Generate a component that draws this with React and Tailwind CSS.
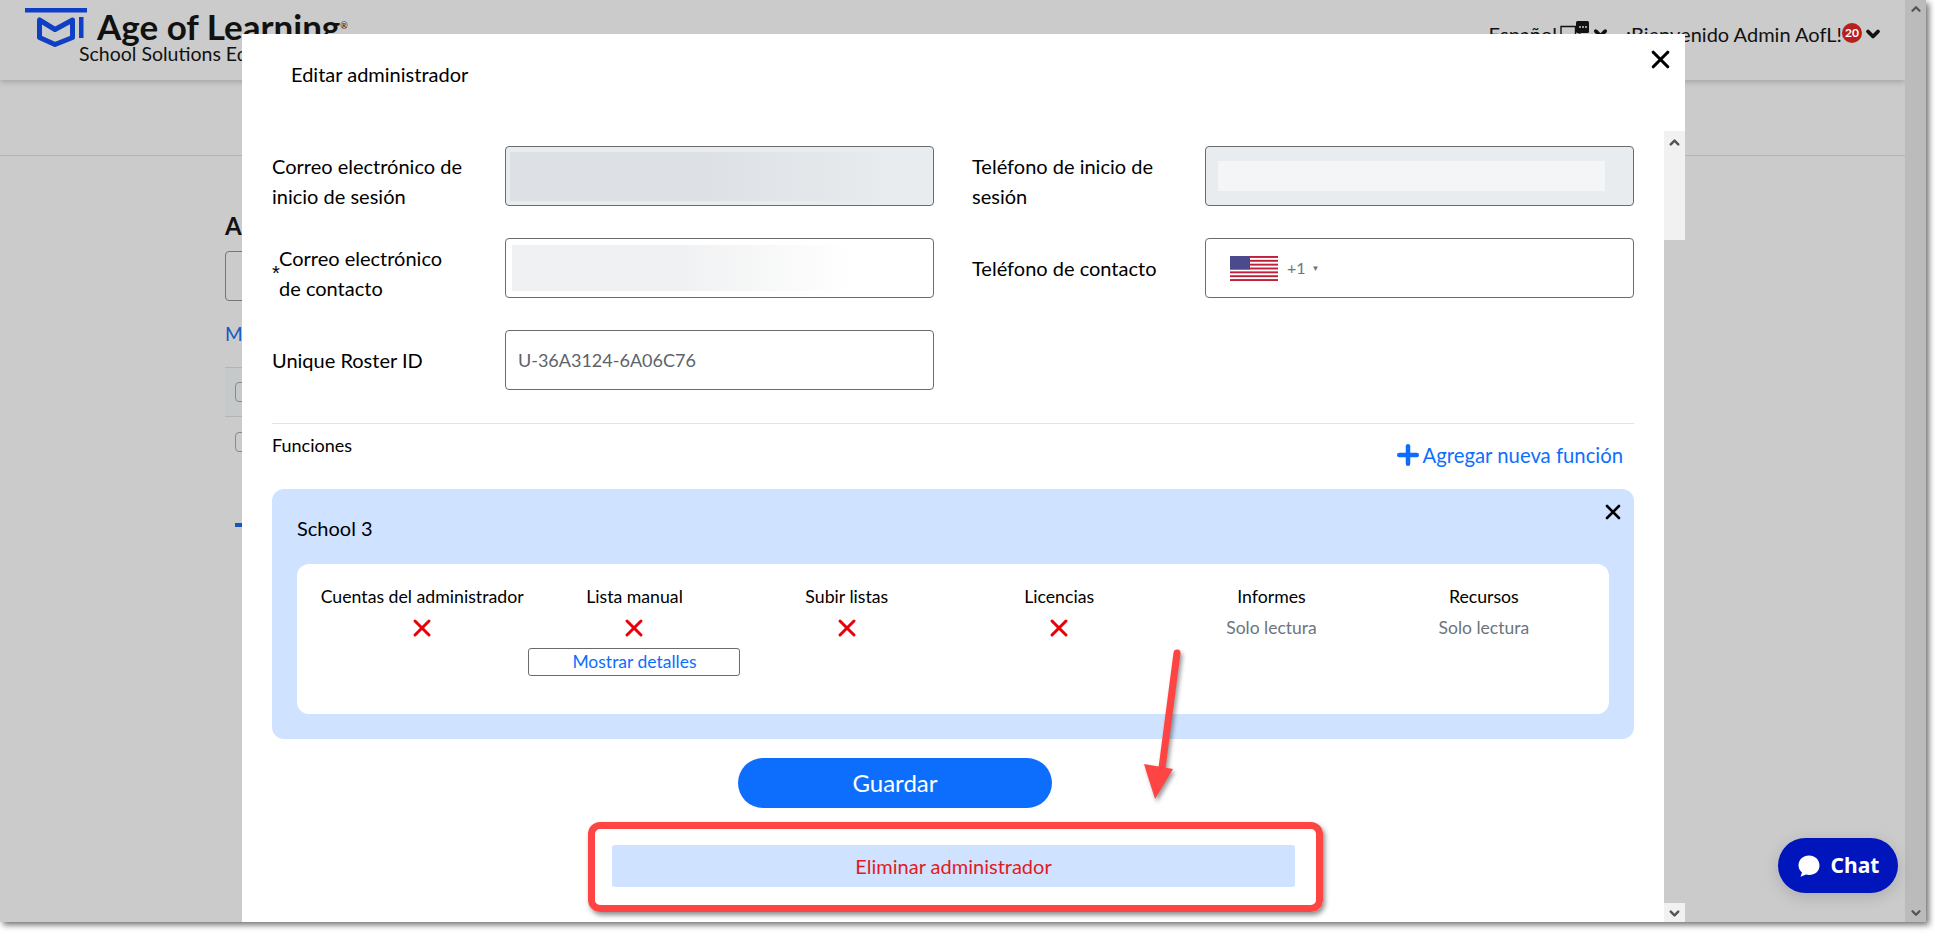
import { X, ChevronUp, ChevronDown, Plus } from "lucide-react";

const permissions = [
  { name: "Cuentas del administrador", denied: true },
  { name: "Lista manual", denied: true, details: true },
  { name: "Subir listas", denied: true },
  { name: "Licencias", denied: true },
  { name: "Informes", denied: false },
  { name: "Recursos", denied: false },
];

function Logo() {
  return (
    <svg width="62" height="40" viewBox="0 0 62 40" className="shrink-0">
      <rect x="0" y="0" width="62" height="4.500" fill="#0f3fc4" />
      <path d="M14.500 12v17.500L30 36.500l17.500-7V12L30 21.500z" fill="none" stroke="#0f3fc4" strokeWidth="5" strokeLinejoin="round" />
      <rect x="54" y="9" width="4.500" height="21" fill="#0f3fc4" />
    </svg>
  );
}

function LanguageIcon() {
  return (
    <svg width="30" height="20" viewBox="0 0 30 20" className="shrink-0 ml-[3px]">
      <path d="M1 5.500h14.500v10H8l-2.500 3-1-3H1z" fill="none" stroke="#111" strokeWidth="1.400" />
      <path d="M16 1.500q0-1.500 1.500-1.500h10q1.500 0 1.500 1.500v9q0 1.500-1.500 1.500h-10q-1.500 0-1.500-1.500z" fill="#111" />
      <circle cx="20" cy="6" r="0.900" fill="#ddd" />
      <circle cx="23" cy="6" r="0.900" fill="#ddd" />
      <circle cx="26" cy="6" r="0.900" fill="#ddd" />
      <circle cx="19.500" cy="14.500" r="2.200" fill="#111" />
      <rect x="17" y="16" width="5" height="4" fill="#111" />
    </svg>
  );
}

function UsFlag() {
  const stripes = [0, 2, 4, 6, 8, 10, 12];
  return (
    <svg width="48" height="25" viewBox="0 0 48 25" className="shrink-0">
      <rect width="48" height="25" fill="#fff" />
      {stripes.map((i) => (
        <rect key={i} y={(i * 25) / 13} width="48" height={25 / 13} fill="#c0203a" />
      ))}
      <rect width="20" height="13.5" fill="#4a4a8c" />
    </svg>
  );
}

function Field({ label, star, tall, children }) {
  return (
    <div className="flex items-center w-[662px]">
      <div
        className={`w-[233px] shrink-0 pr-[30px] text-[20px] leading-[30px] text-black relative ${star ? "pl-[7px]" : ""} ${
          tall ? "h-[60px] pt-[5px]" : ""
        }`}
      >
        {star && <span className="absolute left-0 top-[20px] text-[20px] font-['Liberation_Sans',sans-serif]">*</span>}
        {label}
      </div>
      {children}
    </div>
  );
}

function Box({ disabled, children }) {
  return (
    <div
      className={`w-[429px] h-[60px] rounded-[4px] border border-[#6b6b6b] flex items-center overflow-hidden ${
        disabled ? "bg-[#e9ecef]" : "bg-white"
      }`}
    >
      {children}
    </div>
  );
}

export default function App() {
  return (
    <div className="relative w-[1935px] h-[936px] bg-white overflow-hidden font-['Lato',sans-serif]">
      <div className="relative w-[1926px] h-[922px] bg-[#cbcbcb] shadow-[3px_3px_6px_rgba(0,0,0,0.55)] flex overflow-hidden">
        {/* page behind the modal */}
        <div className="flex-1 min-w-0 flex flex-col">
          <header className="h-[80px] shadow-[0_2px_6px_rgba(0,0,0,0.2)] flex justify-between pl-[25px] pr-[22px]">
            <div className="pt-[8px] flex">
              <Logo />
              <div className="ml-[10px]">
                <div className="text-[35px] leading-[36px] font-bold text-[#111] whitespace-nowrap">
                  Age of Learning<span className="align-top text-[9px] font-normal">®</span>
                </div>
                <div className="-ml-[18px] text-[19.5px] leading-[20px] text-[#111] whitespace-nowrap">
                  School Solutions Edition
                </div>
              </div>
            </div>
            <div className="flex items-start pt-[21px] text-[20px] leading-[26px] text-[#111]">
              <span>Español</span>
              <LanguageIcon />
              <ChevronDown className="ml-[1px] mt-[3px]" size={19} strokeWidth={4.5} color="#111" />
              <span className="ml-[16px]">¡Bienvenido Admin AofL!</span>
              <span className="w-[20px] h-[20px] rounded-full bg-[#b81f1f] text-white text-[12px] leading-[20px] font-bold text-center mt-[2px]">
                20
              </span>
              <ChevronDown className="ml-[1px] mt-[3px]" size={20} strokeWidth={4.5} color="#111" />
            </div>
          </header>
          <div className="h-[76px] border-b border-[#b4b4b4]" />
          <div className="pl-[225px] pt-[55px]">
            <div className="text-[24px] leading-[30px] font-bold text-[#111]">A</div>
            <div className="mt-[10px] w-[60px] h-[50px] border border-[#777] rounded-[4px]" />
            <div className="mt-[21px] text-[19px] leading-[24px] text-[#1656c4]">M</div>
            <div className="mt-[21px] w-[100px] h-[50px] border-y border-[#b4b4b4] bg-[#c6c9c9] flex items-center pl-[10px]">
              <span className="w-[20px] h-[20px] border border-[#8a8a8a] rounded-[4px]" />
            </div>
            <div className="h-[50px] flex items-center pl-[10px]">
              <span className="w-[20px] h-[20px] border border-[#8a8a8a] rounded-[4px]" />
            </div>
            <div className="mt-[56px] ml-[10px] w-[20px] h-[4px] bg-[#1656c4]" />
          </div>
        </div>
        <div className="w-[21px] shrink-0 bg-[#bbbbbb] flex flex-col justify-between items-center py-[2px]">
          <ChevronUp size={14} strokeWidth={4} color="#555" />
          <ChevronDown size={14} strokeWidth={4} color="#555" />
        </div>

        {/* modal */}
        <div className="absolute left-[242px] top-[34px] w-[1443px] h-[888px] flex flex-col">
          <div className="h-[97px] shrink-0 bg-white flex justify-between pl-[49px] pr-[10px]">
            <div className="pt-[26px] text-[20px] leading-[28px] text-black">Editar administrador</div>
            <X className="mt-[11px]" size={29} strokeWidth={2.6} color="#000" />
          </div>
          <div className="flex-1 min-h-0 flex">
            <div className="flex-1 bg-white pl-[30px] pr-[30px] overflow-hidden">
              <div className="pt-[15px] grid grid-cols-[662px_662px] gap-x-[38px] gap-y-[32px]">
                <Field tall label="Correo electrónico de inicio de sesión">
                  <Box disabled>
                    <div className="ml-[4px] w-[385px] h-[49px] bg-gradient-to-r from-[#dde0e4] via-[#dde0e4] to-[#e9ecef]" />
                  </Box>
                </Field>
                <Field tall label="Teléfono de inicio de sesión">
                  <Box disabled>
                    <div className="ml-[12px] w-[387px] h-[30px] bg-[#f4f5f7]" />
                  </Box>
                </Field>
                <Field tall star label={<span className="block w-[180px]">Correo electrónico de contacto</span>}>
                  <Box>
                    <div className="ml-[6px] w-[340px] h-[46px] bg-gradient-to-r from-[#f0f1f2] via-[#f0f1f2] to-white" />
                  </Box>
                </Field>
                <Field label="Teléfono de contacto">
                  <Box>
                    <div className="ml-[24px] flex items-center">
                      <UsFlag />
                      <span className="ml-[9px] text-[16px] text-[#6c757d]">+1</span>
                      <span className="ml-[6px] text-[8px] text-[#6c757d]">▼</span>
                    </div>
                  </Box>
                </Field>
                <Field label="Unique Roster ID">
                  <Box>
                    <span className="ml-[12px] text-[18px] text-[#5c636a]">U-36A3124-6A06C76</span>
                  </Box>
                </Field>
              </div>
              <div className="mt-[33px] border-t border-[#e3e3e3] flex justify-between items-start pr-[11px] w-[1362px]">
                <span className="mt-[11px] text-[18px] leading-[20px] text-black">Funciones</span>
                <span className="mt-[15px] flex items-center text-[20.3px] leading-[32px] text-[#0d6efd]">
                  <Plus size={30} strokeWidth={3.6} />
                  Agregar nueva función
                </span>
              </div>
              <section className="mt-[18px] w-[1362px] h-[250px] rounded-[12px] bg-[#cfe2ff] px-[25px] relative">
                <X className="absolute right-[9px] top-[11px]" size={24} strokeWidth={2.6} color="#000" />
                <div className="h-[75px] flex items-center text-[20px] pt-[2px] text-black">School 3</div>
                <div className="h-[150px] rounded-[12px] bg-white grid grid-cols-6 px-[19px] pt-[21px]">
                  {permissions.map((p) => (
                    <div key={p.name} className="flex flex-col items-center">
                      <span className="text-[17.7px] leading-[24px] text-black whitespace-nowrap">{p.name}</span>
                      {p.denied ? (
                        <X className="mt-[5px]" size={28} strokeWidth={2.6} color="#e8000b" />
                      ) : (
                        <span className="mt-[7px] text-[17.5px] leading-[24px] text-[#6c757d]">Solo lectura</span>
                      )}
                      {p.details && (
                        <div className="mt-[6px] w-[212px] h-[28px] border border-[#6b6b6b] rounded-[3px] text-center text-[17.5px] leading-[26px] text-[#0d6efd]">
                          Mostrar detalles
                        </div>
                      )}
                    </div>
                  ))}
                </div>
              </section>
              <div className="mt-[19px] w-[1362px]">
                <div className="ml-[466px] w-[314px] h-[50px] rounded-full bg-[#0d6efd] text-white text-[24px] leading-[50px] text-center">
                  Guardar
                </div>
                <div className="mt-[37px] ml-[340px] w-[683px] h-[42px] rounded-[3px] bg-[#cfe2ff] text-[#e01b22] text-[20px] leading-[42px] text-center">
                  Eliminar administrador
                </div>
              </div>
            </div>
            <div className="w-[21px] shrink-0 flex flex-col justify-between">
              <div className="h-[109px] bg-[#f1f1f1] flex justify-center pt-[4px]">
                <ChevronUp size={15} strokeWidth={4} color="#555" />
              </div>
              <div className="h-[19px] bg-[#f1f1f1] flex justify-center pt-[3px]">
                <ChevronDown size={15} strokeWidth={4} color="#555" />
              </div>
            </div>
          </div>
        </div>

        {/* chat launcher */}
        <div className="absolute left-[1778px] top-[838px] w-[120px] h-[55px] rounded-full bg-[#0015bc] shadow-[0_4px_16px_rgba(0,0,0,0.15)] flex items-center justify-center text-white text-[21px] font-bold font-['Noto_Sans',sans-serif]">
          <svg width="24" height="24" viewBox="0 0 24 24" className="mr-[10px]">
            <path d="M12 1.500c6 0 10.500 4.200 10.500 10s-4.500 9.500-10.500 9.500c-1 0-2-.1-3-.4L3.500 22.800l1.500-4.300C2.800 16.700 1.500 14.300 1.500 11.500c0-5.800 4.500-10 10.500-10z" fill="#fff" />
          </svg>
          Chat
        </div>
      </div>

      {/* annotation */}
      <div className="absolute left-[588px] top-[822px] w-[735px] h-[90px] rounded-[12px] border-[7px] border-[#ff4444] shadow-[2px_3px_5px_rgba(0,0,0,0.45)]" />
      <svg className="absolute left-[1130px] top-[640px] drop-shadow-[2px_3px_2px_rgba(0,0,0,0.4)]" width="60" height="170" viewBox="0 0 60 170">
        <path d="M47 13L32 128" stroke="#ff4444" strokeWidth="7" strokeLinecap="round" fill="none" />
        <path d="M14 124L43 129L25 159z" fill="#ff4444" />
      </svg>
    </div>
  );
}
